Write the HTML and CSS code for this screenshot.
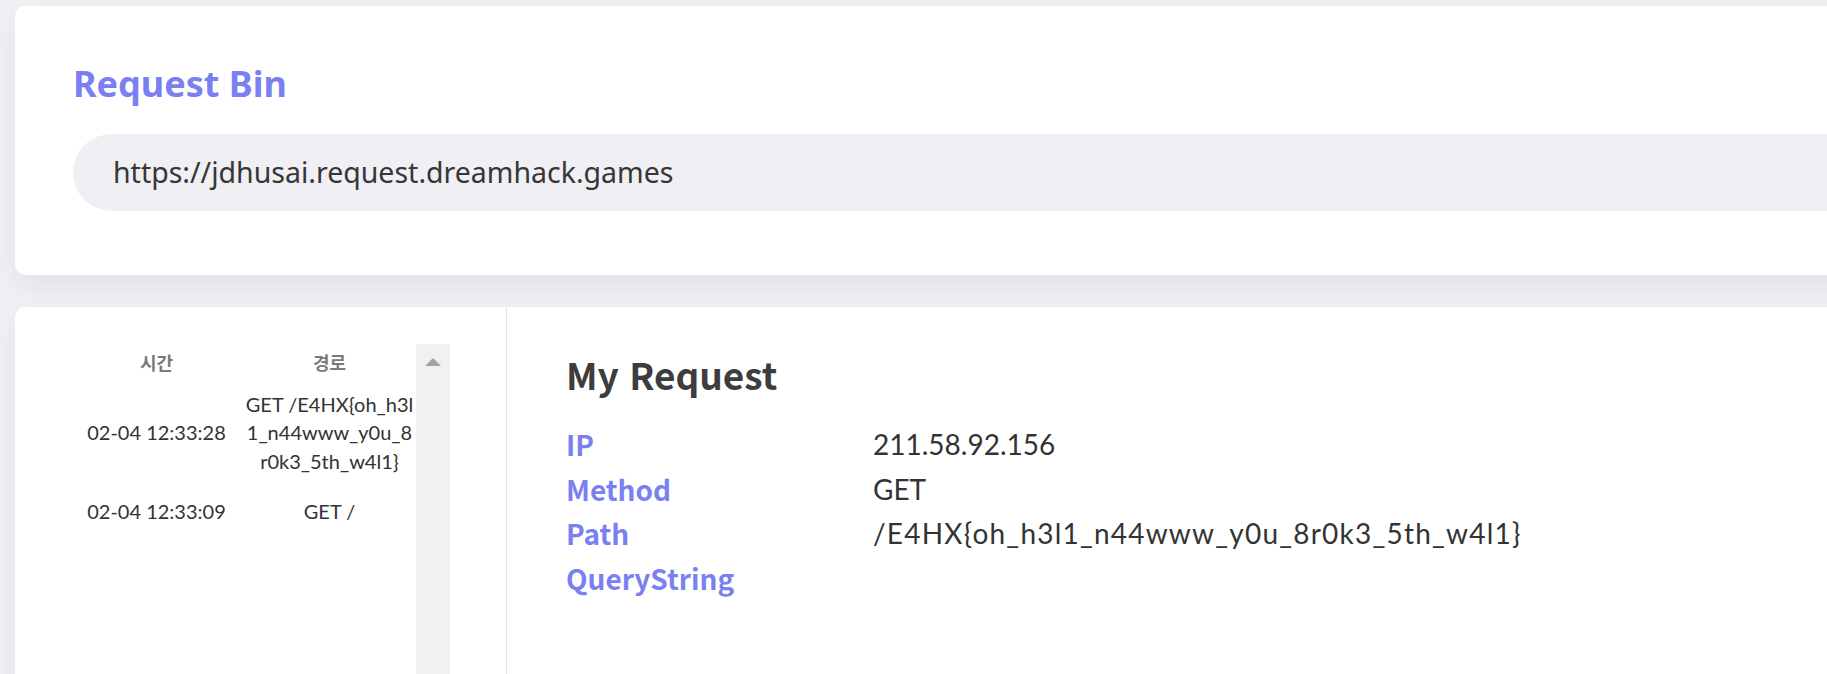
FILE: index.html
```html
<!DOCTYPE html>
<html lang="ko">
<head>
<meta charset="utf-8">
<title>Request Bin</title>
<link rel="stylesheet" href="styles.css">
</head>
<body>
<div class="page">
  <section class="card bin-card">
    <h1 class="bin-title">Request Bin</h1>
    <div class="url-pill">https://jdhusai.request.dreamhack.games</div>
  </section>

  <section class="card main-card">
    <aside class="list-panel">
      <div class="scroll-area">
        <table class="req-table">
          <thead>
            <tr><th>시간</th><th>경로</th></tr>
          </thead>
          <tbody>
            <tr><td>02-04 12:33:28</td><td class="path-cell">GET /E4HX{oh_h3l<br>1_n44www_y0u_8<br>r0k3_5th_w4l1}</td></tr>
            <tr><td>02-04 12:33:09</td><td class="path-cell">GET /</td></tr>
          </tbody>
        </table>
        <div class="scrollbar"><span class="arrow-up"></span></div>
      </div>
    </aside>
    <div class="detail-panel">
      <h2 class="detail-title">My Request</h2>
      <dl class="info">
        <dt>IP</dt><dd>211.58.92.156</dd>
        <dt>Method</dt><dd>GET</dd>
        <dt>Path</dt><dd class="path-value">/E4HX{oh_h3l1_n44www_y0u_8r0k3_5th_w4l1}</dd>
        <dt>QueryString</dt><dd></dd>
      </dl>
    </div>
  </section>
</div>
</body>
</html>
```

FILE: styles.css
```css
html, body {
  margin: 0;
  padding: 0;
  overflow: hidden;
  background: #efeff4;
}

body {
  font-family: "Lato", "Noto Sans CJK KR", sans-serif;
  color: #3a3a3a;
}

.page {
  width: 2100px;
  padding: 6px 0 0 15px;
  display: flex;
  flex-direction: column;
  gap: 32px;
}

.card {
  background: #ffffff;
  border-radius: 10px;
  box-shadow: 0 12px 24px rgba(40, 40, 60, 0.06);
}

.bin-card {
  padding: 54px 0 64px 58px;
}

.bin-title {
  margin: 0 0 26px 0;
  font-family: "Noto Sans", sans-serif;
  font-weight: 700;
  font-size: 36px;
  line-height: 48px;
  color: #7a7ff2;
}

.url-pill {
  height: 77px;
  line-height: 77px;
  padding-left: 40px;
  border-radius: 39px;
  background: #efeff4;
  font-family: "Noto Sans", sans-serif;
  font-size: 28.5px;
  color: #363636;
}

.main-card {
  display: flex;
  min-height: 430px;
}

.list-panel {
  width: 436px;
  padding: 37px 0 0 55px;
  border-right: 1px solid #e6e6ea;
}

.scroll-area {
  display: flex;
  height: 360px;
}

.req-table {
  width: 346px;
  border-collapse: collapse;
  table-layout: fixed;
  align-self: flex-start;
}

.req-table th {
  height: 35px;
  padding: 0;
  font-family: "Noto Sans CJK KR", sans-serif;
  font-weight: 700;
  font-size: 18px;
  line-height: 30px;
  color: #7a7a7a;
  text-align: center;
  vertical-align: middle;
}

.req-table td {
  padding: 11px 0;
  font-family: "Lato", sans-serif;
  font-size: 20px;
  line-height: 28.4px;
  color: #333333;
  text-align: center;
  vertical-align: middle;
}

.req-table .path-cell {
  padding-left: 0;
  padding-right: 0;
  white-space: nowrap;
}

.scrollbar {
  width: 34px;
  background: #f1f1f1;
  display: flex;
  justify-content: center;
  padding-top: 14px;
  box-sizing: border-box;
}

.arrow-up {
  width: 0;
  height: 0;
  border-left: 8px solid transparent;
  border-right: 8px solid transparent;
  border-bottom: 8px solid #a3a3a3;
}

.detail-panel {
  flex: 1;
  padding: 42px 0 0 59px;
}

.detail-title {
  margin: 0 0 23px 0;
  font-family: "Noto Sans CJK KR", sans-serif;
  font-weight: 700;
  font-size: 37px;
  line-height: 50px;
  color: #3d3d3d;
}

.info {
  margin: 0;
  display: grid;
  grid-template-columns: 307px 1fr;
  grid-auto-rows: 44.5px;
}

.info dt {
  font-family: "Noto Sans CJK KR", sans-serif;
  font-weight: 700;
  font-size: 28px;
  line-height: 44.5px;
  color: #7a7ff2;
}

.info dd {
  margin: 0;
  font-family: "Lato", sans-serif;
  font-size: 28px;
  line-height: 44.5px;
  color: #333333;
}

.info .path-value {
  letter-spacing: 0.043em;
}
```
